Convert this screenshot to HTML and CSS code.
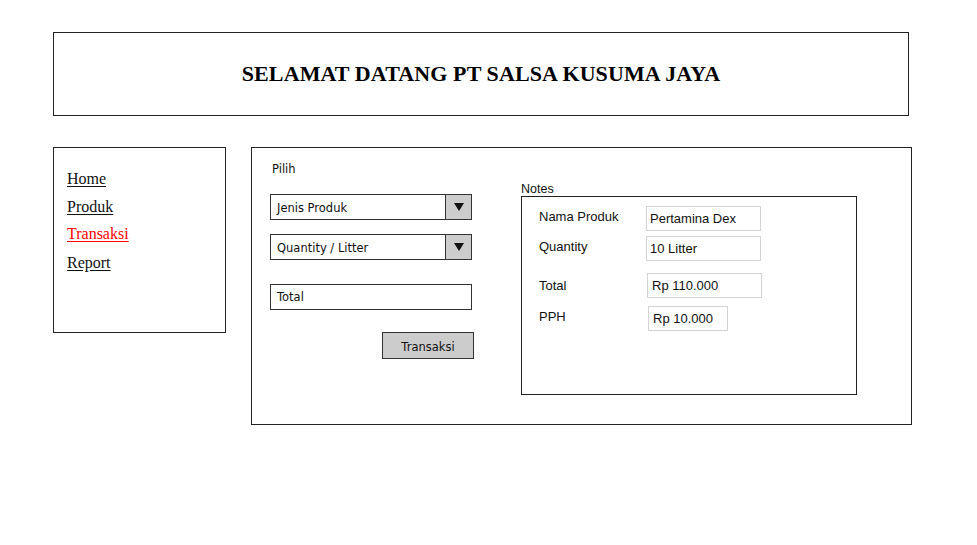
FILE: index.html
```html
<!DOCTYPE html>
<html>
<head>
<meta charset="utf-8">
<link rel="stylesheet" href="styles.css">
</head>
<body>
<div class="page">
  <header class="header">
    <h1 class="title">SELAMAT DATANG PT SALSA KUSUMA JAYA</h1>
  </header>
  <div class="row">
    <nav class="sidebar">
      <a class="nav-link">Home</a>
      <a class="nav-link">Produk</a>
      <a class="nav-link active">Transaksi</a>
      <a class="nav-link">Report</a>
    </nav>
    <main class="panel">
      <div class="left">
        <div class="pilih">Pilih</div>
        <div class="select s1"><span class="select-text">Jenis Produk</span><span class="arrow"><svg width="10" height="8" viewBox="0 0 10 8"><path d="M0 0 H10 L5 8 Z" fill="#111"/></svg></span></div>
        <div class="select s2"><span class="select-text">Quantity / Litter</span><span class="arrow"><svg width="10" height="8" viewBox="0 0 10 8"><path d="M0 0 H10 L5 8 Z" fill="#111"/></svg></span></div>
        <div class="field">Total</div>
        <div class="btn-row"><div class="btn">Transaksi</div></div>
      </div>
      <div class="right">
        <div class="notes-label">Notes</div>
        <div class="notes">
          <div class="nrow r1"><span class="nlabel">Nama Produk</span><span class="nval w1">Pertamina Dex</span></div>
          <div class="nrow r2"><span class="nlabel">Quantity</span><span class="nval w1">10 Litter</span></div>
          <div class="nrow r3"><span class="nlabel">Total</span><span class="nval w1 o1">Rp 110.000</span></div>
          <div class="nrow r4"><span class="nlabel">PPH</span><span class="nval w2 o2">Rp 10.000</span></div>
        </div>
      </div>
    </main>
  </div>
</div>
</body>
</html>
```
FILE: styles.css
```css
* { box-sizing: border-box; }
html, body { margin: 0; padding: 0; background: #fff; }
body { width: 977px; height: 545px; overflow: hidden; }
.page { padding: 32px 0 0 53px; }
.header {
  width: 856px; height: 84px;
  border: 1px solid #222;
  display: flex; align-items: center; justify-content: center;
}
.title {
  margin: 0; padding: 0 0 0 0;
  font-family: "Liberation Serif", serif;
  font-weight: bold; font-size: 22px; color: #000;
  letter-spacing: 0.1px;
}
.row { display: flex; gap: 25px; margin-top: 31px; align-items: flex-start; }
.sidebar {
  width: 173px; height: 186px;
  border: 1px solid #222;
  padding: 21px 0 0 13px;
  display: flex; flex-direction: column; gap: 9px;
}
.nav-link {
  font-family: "Liberation Serif", serif; font-size: 16px; line-height: 19px;
  color: #111; text-decoration: underline; text-underline-offset: 2px;
}
.nav-link.active { color: #ff0000; margin-top: -1px; margin-bottom: 1px; }
.panel {
  width: 661px; height: 278px;
  border: 1px solid #222;
  display: flex;
  padding: 0 0 0 18px;
}
.left { width: 204px; padding-top: 14px; font-family: "DejaVu Sans", sans-serif; }
.pilih { font-size: 11.5px; line-height: 14px; color: #111; padding-left: 2px; }
.select {
  width: 202px; height: 26px;
  border: 1px solid #333;
  display: flex; align-items: stretch;
  margin-top: 18px;
}
.select.s2 { margin-top: 14px; }
.select-text { flex: 1; font-size: 11.5px; line-height: 26px; padding-left: 6px; color: #111; }
.arrow {
  width: 26px; background: #cccccc; border-left: 1px solid #333;
  display: flex; align-items: center; justify-content: center;
}
.field {
  width: 202px; height: 26px; border: 1px solid #333;
  margin-top: 24px;
  font-size: 11.5px; line-height: 24px; padding-left: 6px; color: #111;
}
.btn-row { display: flex; justify-content: flex-end; margin-top: 22px; }
.btn {
  width: 92px; height: 27px; background: #cccccc; border: 1px solid #333;
  font-size: 11.5px; line-height: 28px; text-align: center; color: #111;
}
.right { margin-left: 47px; padding-top: 34px; font-family: "Liberation Sans", sans-serif; }
.notes-label { font-size: 12.5px; line-height: 14px; color: #111; }
.notes {
  width: 336px; height: 199px; border: 1px solid #222;
  padding: 9px 0 0 17px;
}
.nrow { display: flex; align-items: flex-start; }
.nlabel { width: 107px; font-size: 13px; line-height: 15px; color: #111; padding-top: 5px; }
.nval {
  height: 25px; border: 1px solid #d4d4d4;
  font-size: 13px; line-height: 23px; padding-left: 3px; color: #111;
}
.w1 { width: 115px; }
.w2 { width: 80px; padding-left: 4px; }
.o1 { margin-left: 1px; padding-left: 4px; }
.o2 { margin-left: 2px; }
.r1 .nlabel { padding-top: 3px; }
.r2 { margin-top: 5px; }
.r2 .nlabel { padding-top: 3px; }
.r3 { margin-top: 12px; }
.r3 .nlabel { padding-top: 5px; }
.r4 { margin-top: 8px; }
.r4 .nlabel { padding-top: 3px; }
```
